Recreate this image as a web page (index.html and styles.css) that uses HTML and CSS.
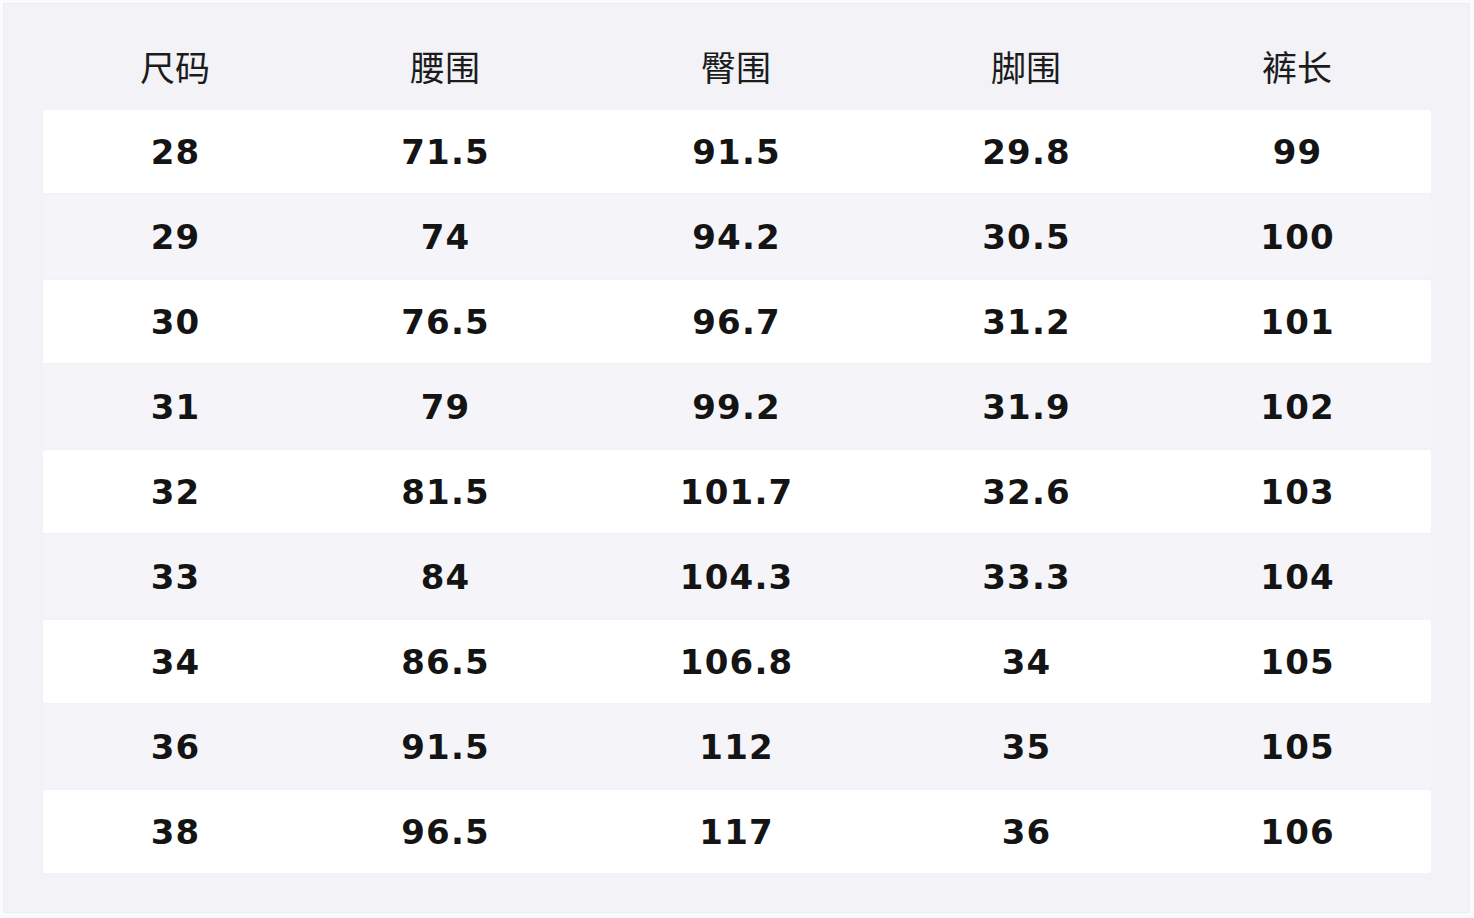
FILE: index.html
```html
<!DOCTYPE html>
<html lang="zh">
<head>
<meta charset="utf-8">
<title>尺码表</title>
<link rel="stylesheet" href="styles.css">
</head>
<body>
<div class="panel">
  <div class="row head">
    <div>尺码</div><div>腰围</div><div>臀围</div><div>脚围</div><div>裤长</div>
  </div>
  <div class="rows">
    <div class="row odd"><div>28</div><div>71.5</div><div>91.5</div><div>29.8</div><div>99</div></div>
    <div class="row even"><div>29</div><div>74</div><div>94.2</div><div>30.5</div><div>100</div></div>
    <div class="row odd"><div>30</div><div>76.5</div><div>96.7</div><div>31.2</div><div>101</div></div>
    <div class="row even"><div>31</div><div>79</div><div>99.2</div><div>31.9</div><div>102</div></div>
    <div class="row odd"><div>32</div><div>81.5</div><div>101.7</div><div>32.6</div><div>103</div></div>
    <div class="row even"><div>33</div><div>84</div><div>104.3</div><div>33.3</div><div>104</div></div>
    <div class="row odd"><div>34</div><div>86.5</div><div>106.8</div><div>34</div><div>105</div></div>
    <div class="row even"><div>36</div><div>91.5</div><div>112</div><div>35</div><div>105</div></div>
    <div class="row odd"><div>38</div><div>96.5</div><div>117</div><div>36</div><div>106</div></div>
  </div>
</div>
</body>
</html>
```
FILE: styles.css
```css
html, body {
  margin: 0;
  padding: 0;
  background: #fbfbfc;
}
body {
  padding: 3px 4px 4px 3px;
  box-sizing: border-box;
  width: 1474px;
  height: 918px;
}
.panel {
  box-sizing: border-box;
  width: 1467px;
  height: 910px;
  background: #f2f2f7;
  border: 1px solid #eeeef2;
  padding: 19px 38px 0 39px;
}
.row {
  display: grid;
  grid-template-columns: 264px 276px 306px 274px 268px;
  align-items: center;
  text-align: center;
}
.head {
  height: 87px;
  font-family: "Noto Sans CJK SC", "Noto Sans", sans-serif;
  font-size: 35px;
  color: #1c1c1c;
  line-height: 1;
  padding-bottom: 2px;
  box-sizing: border-box;
}
.rows {
  display: flex;
  flex-direction: column;
  gap: 2px;
}
.rows .row {
  height: 83px;
  font-family: "DejaVu Sans", sans-serif;
  font-weight: bold;
  font-size: 34px;
  letter-spacing: 1.2px;
  text-indent: 1.2px;
  color: #141414;
  border-radius: 2px;
}
.odd {
  background: #ffffff;
}
.even {
  background: #f4f4f9;
}
```
